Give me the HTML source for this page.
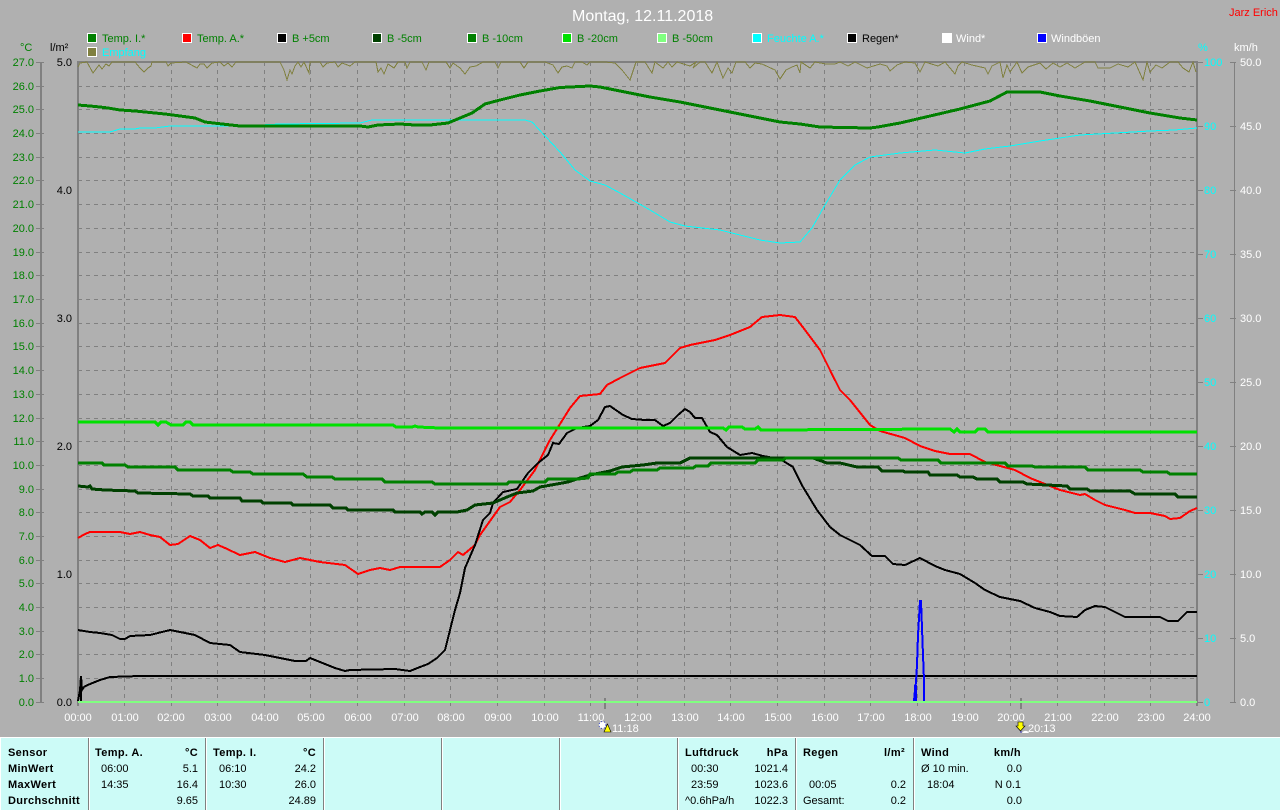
<!DOCTYPE html>
<html><head><meta charset="utf-8"><title>Montag, 12.11.2018</title>
<style>
html,body{margin:0;padding:0;background:#b0b0b0;width:1280px;height:810px;overflow:hidden}
svg{display:block}
text{font-family:"Liberation Sans",sans-serif;font-size:11px}
polyline{fill:none}
.b{font-weight:bold;letter-spacing:.35px}
</style></head><body>
<svg width="1280" height="810" viewBox="0 0 1280 810" xmlns="http://www.w3.org/2000/svg">
<rect width="1280" height="810" fill="#b0b0b0"/>
<text x="572" y="21" fill="#fff" style="font-size:16px">Montag, 12.11.2018</text>
<text x="1229" y="16" fill="#f00">Jarz Erich</text>

<!-- legend -->
<g stroke="#fff" stroke-width="1" shape-rendering="crispEdges">
<rect x="87.5" y="33.5" width="9" height="9" fill="#008000"/>
<rect x="182.5" y="33.5" width="9" height="9" fill="#f00"/>
<rect x="277.5" y="33.5" width="9" height="9" fill="#000"/>
<rect x="372.5" y="33.5" width="9" height="9" fill="#004000"/>
<rect x="467.5" y="33.5" width="9" height="9" fill="#008000"/>
<rect x="562.5" y="33.5" width="9" height="9" fill="#00e000"/>
<rect x="657.5" y="33.5" width="9" height="9" fill="#80ff80"/>
<rect x="752.5" y="33.5" width="9" height="9" fill="#0ff"/>
<rect x="847.5" y="33.5" width="9" height="9" fill="#000"/>
<rect x="942.5" y="33.5" width="9" height="9" fill="#fff"/>
<rect x="1037.5" y="33.5" width="9" height="9" fill="#00f"/>
<rect x="87.5" y="47.5" width="9" height="9" fill="#808040"/>
</g>
<g fill="#008000">
<text x="102" y="42">Temp. I.*</text>
<text x="197" y="42">Temp. A.*</text>
<text x="292" y="42">B +5cm</text>
<text x="387" y="42">B -5cm</text>
<text x="482" y="42">B -10cm</text>
<text x="577" y="42">B -20cm</text>
<text x="672" y="42">B -50cm</text>
</g>
<text x="767" y="42" fill="#0ff">Feuchte A.*</text>
<text x="862" y="42" fill="#000">Regen*</text>
<text x="956" y="42" fill="#fff">Wind*</text>
<text x="1051" y="42" fill="#fff">Windböen</text>
<text x="102" y="56" fill="#0ff">Empfang</text>

<!-- axis headers -->
<text x="20" y="51" fill="#008000">°C</text>
<text x="50" y="51" fill="#000">l/m²</text>
<text x="1198" y="51" fill="#0ff">%</text>
<text x="1234" y="51" fill="#fff">km/h</text>

<!-- grid -->
<path shape-rendering="crispEdges" fill="none" stroke="#808080" stroke-width="1" stroke-dasharray="4 4" d="M78 86.5H1197M78 109.5H1197M78 133.5H1197M78 157.5H1197M78 180.5H1197M78 204.5H1197M78 228.5H1197M78 252.5H1197M78 275.5H1197M78 299.5H1197M78 323.5H1197M78 346.5H1197M78 370.5H1197M78 394.5H1197M78 418.5H1197M78 441.5H1197M78 465.5H1197M78 489.5H1197M78 512.5H1197M78 536.5H1197M78 560.5H1197M78 583.5H1197M78 607.5H1197M78 631.5H1197M78 654.5H1197M78 678.5H1197"/>
<path shape-rendering="crispEdges" fill="none" stroke="#808080" stroke-width="1" stroke-dasharray="4 4" d="M124.5 62V707M171.5 62V707M217.5 62V707M264.5 62V707M310.5 62V707M357.5 62V707M404.5 62V707M450.5 62V707M497.5 62V707M544.5 62V707M590.5 62V707M637.5 62V707M684.5 62V707M730.5 62V707M777.5 62V707M824.5 62V707M870.5 62V707M917.5 62V707M964.5 62V707M1010.5 62V707M1057.5 62V707M1104.5 62V707M1150.5 62V707"/>

<!-- frame and axes -->
<g shape-rendering="crispEdges" fill="#808080">
<rect x="77" y="61" width="1121" height="2"/>
<rect x="77" y="61" width="2" height="645"/>
<rect x="1196" y="61" width="2" height="645"/>
<rect x="40" y="62" width="2" height="640"/>
<rect x="1234" y="62" width="1" height="640"/>
<rect x="604" y="698" width="2" height="11"/>
<rect x="1020" y="698" width="2" height="11"/>
</g>
<path shape-rendering="crispEdges" stroke="#808080" stroke-width="1" fill="none" d="M36 62.5H44M36 86.5H44M36 109.5H44M36 133.5H44M36 157.5H44M36 180.5H44M36 204.5H44M36 228.5H44M36 252.5H44M36 275.5H44M36 299.5H44M36 323.5H44M36 346.5H44M36 370.5H44M36 394.5H44M36 418.5H44M36 441.5H44M36 465.5H44M36 489.5H44M36 512.5H44M36 536.5H44M36 560.5H44M36 583.5H44M36 607.5H44M36 631.5H44M36 654.5H44M36 678.5H44M36 702.5H44M1230 62.5H1236M1230 126.5H1236M1230 190.5H1236M1230 254.5H1236M1230 318.5H1236M1230 382.5H1236M1230 446.5H1236M1230 510.5H1236M1230 574.5H1236M1230 638.5H1236M1230 702.5H1236M1198 62.5H1203M1198 126.5H1203M1198 190.5H1203M1198 254.5H1203M1198 318.5H1203M1198 382.5H1203M1198 446.5H1203M1198 510.5H1203M1198 574.5H1203M1198 638.5H1203M1198 702.5H1203"/>

<!-- axis labels -->
<g fill="#008000" text-anchor="end">
<text x="34" y="66">27.0</text><text x="34" y="90">26.0</text><text x="34" y="113">25.0</text><text x="34" y="137">24.0</text><text x="34" y="161">23.0</text><text x="34" y="184">22.0</text><text x="34" y="208">21.0</text><text x="34" y="232">20.0</text><text x="34" y="256">19.0</text><text x="34" y="279">18.0</text><text x="34" y="303">17.0</text><text x="34" y="327">16.0</text><text x="34" y="350">15.0</text><text x="34" y="374">14.0</text><text x="34" y="398">13.0</text><text x="34" y="422">12.0</text><text x="34" y="445">11.0</text><text x="34" y="469">10.0</text><text x="34" y="493">9.0</text><text x="34" y="516">8.0</text><text x="34" y="540">7.0</text><text x="34" y="564">6.0</text><text x="34" y="587">5.0</text><text x="34" y="611">4.0</text><text x="34" y="635">3.0</text><text x="34" y="658">2.0</text><text x="34" y="682">1.0</text><text x="34" y="706">0.0</text>
</g>
<g fill="#000" text-anchor="end">
<text x="72" y="66">5.0</text><text x="72" y="194">4.0</text><text x="72" y="322">3.0</text><text x="72" y="450">2.0</text><text x="72" y="578">1.0</text><text x="72" y="706">0.0</text>
</g>
<g fill="#0ff">
<text x="1204" y="66">100</text><text x="1204" y="130">90</text><text x="1204" y="194">80</text><text x="1204" y="258">70</text><text x="1204" y="322">60</text><text x="1204" y="386">50</text><text x="1204" y="450">40</text><text x="1204" y="514">30</text><text x="1204" y="578">20</text><text x="1204" y="642">10</text><text x="1204" y="706">0</text>
</g>
<g fill="#fff">
<text x="1240" y="66">50.0</text><text x="1240" y="130">45.0</text><text x="1240" y="194">40.0</text><text x="1240" y="258">35.0</text><text x="1240" y="322">30.0</text><text x="1240" y="386">25.0</text><text x="1240" y="450">20.0</text><text x="1240" y="514">15.0</text><text x="1240" y="578">10.0</text><text x="1240" y="642">5.0</text><text x="1240" y="706">0.0</text>
</g>
<g fill="#fff" text-anchor="middle">
<text x="78" y="721">00:00</text><text x="125" y="721">01:00</text><text x="171" y="721">02:00</text><text x="218" y="721">03:00</text><text x="265" y="721">04:00</text><text x="311" y="721">05:00</text><text x="358" y="721">06:00</text><text x="405" y="721">07:00</text><text x="451" y="721">08:00</text><text x="498" y="721">09:00</text><text x="545" y="721">10:00</text><text x="591" y="721">11:00</text><text x="638" y="721">12:00</text><text x="685" y="721">13:00</text><text x="731" y="721">14:00</text><text x="778" y="721">15:00</text><text x="825" y="721">16:00</text><text x="871" y="721">17:00</text><text x="918" y="721">18:00</text><text x="965" y="721">19:00</text><text x="1011" y="721">20:00</text><text x="1058" y="721">21:00</text><text x="1105" y="721">22:00</text><text x="1151" y="721">23:00</text><text x="1197" y="721">24:00</text>
</g>
<text x="612" y="732" fill="#fff">11:18</text>
<text x="1028" y="732" fill="#fff">20:13</text>

<!-- sun icons -->
<circle cx="602.5" cy="725" r="3.5" fill="#fff" stroke="#3040c0" stroke-width="1" stroke-dasharray="1 2"/>
<path d="M607.5 724L611 732H604Z" fill="#ff0" stroke="#000" stroke-width=".6"/>
<path d="M1018 722H1023V726H1025L1020.5 731L1016 726H1018Z" fill="#ff0" stroke="#000" stroke-width=".6"/>
<path d="M1022 733a4 4 0 0 1 7 0Z" fill="#fff"/>
<circle cx="1021" cy="732" r=".7" fill="#22c"/>

<!-- data lines -->
<g fill="none" shape-rendering="crispEdges">
<polyline stroke="#0ff" stroke-width="1" points="78,132 110,132 120,129 135,129 140,128 155,128 170,126 240,126 280,124 360,123 372,120 395,120 400,120 525,120 532,122 545,136 560,152 575,170 590,181 605,185 620,193 650,210 670,222 685,226 720,230 740,235 760,240 780,243 800,242 812,228 825,205 840,180 855,165 870,157 900,153 935,150 965,153 985,149 1010,146 1040,141 1060,138 1080,135 1115,133 1150,131 1175,130 1197,128"/>
<polyline stroke="#808040" stroke-width="1" points="78,67 80,63 87,62 93,73 99,65 102,69 106,64 109,66 112,62 135,62 140,68 144,72 148,68 151,66 152,62 166,62 168,66 171,63 186,62 197,68 200,64 204,64 207,68 212,63 220,62 224,66 228,63 232,67 236,62 264,62 280,62 284,70 287,80 290,70 292,74 295,66 298,62 301,67 304,62 309,73 310,62 320,62 323,67 327,63 335,62 338,67 342,63 350,66 355,62 376,62 378,72 381,68 384,74 388,64 394,68 398,62 405,62 407,68 410,62 422,62 426,70 429,62 437,62 446,62 450,68 453,63 460,68 465,74 470,67 476,66 483,62 495,62 498,68 501,62 520,62 524,68 528,62 545,62 553,65 558,73 562,67 567,66 572,68 575,62 582,62 587,65 590,62 605,62 615,63 622,70 630,80 634,68 636,62 645,62 652,73 655,62 659,65 663,68 668,62 672,67 677,62 690,66 696,62 693,68 700,62 705,62 712,73 717,62 723,78 728,68 732,73 736,62 745,62 750,68 755,63 762,64 775,70 780,79 786,70 792,67 797,65 800,73 801,62 810,68 815,62 826,64 835,64 840,62 848,66 855,62 867,68 880,64 887,66 890,71 897,65 905,62 915,63 920,72 925,62 938,66 945,62 955,74 958,66 962,62 972,65 985,68 988,74 992,66 1000,62 1003,78 1007,65 1010,72 1017,62 1022,73 1028,67 1040,63 1046,69 1053,63 1060,67 1067,63 1075,68 1085,62 1095,62 1098,68 1110,68 1118,64 1128,67 1135,62 1143,80 1147,62 1150,72 1156,65 1162,68 1170,62 1178,62 1183,68 1189,72 1193,62 1196,72"/>
<polyline stroke="#000" stroke-width="2" points="78,701 80,690 81,676 82,690 84,687 90,684 100,680 110,677 140,676 1197,676"/>
<rect x="80" y="676" width="2" height="26" fill="#000"/>
<polyline stroke="#008000" stroke-width="3" points="78,105 90,106 100,107 108,108 120,110 135,111 150,112.5 165,114 180,116 195,118 205,122 222,124 240,126 360,126 368,127 378,125 400,124 415,125 430,125 448,123 460,118 472,113 485,104 500,100 520,95 540,91 560,87.5 590,86 600,87 630,93 650,97 680,102 710,108 730,112 760,118 780,122 800,124 820,127 870,128 878,127 900,123 930,116 960,109 990,101 1007,92 1040,92 1060,96 1090,101 1120,107 1150,113 1180,118 1197,120"/>
<polyline stroke="#f00" stroke-width="2" points="78,538 85,534 90,532 120,532 130,534 140,532 150,535 160,537 170,545 178,544 190,536 200,540 210,548 218,545 225,548 240,555 255,552 270,558 285,562 300,558 310,560 320,562 345,565 358,574 370,570 380,568 390,570 400,567 440,567 450,560 458,552 463,555 475,545 480,535 500,507 510,502 520,490 535,470 550,440 570,408 580,396 600,394 607,385 620,378 640,368 665,363 680,348 690,345 715,340 730,335 750,327 762,317 780,315 795,317 805,330 820,350 830,370 840,390 850,400 870,425 880,431 905,438 920,446 935,451 950,454 970,454 985,462 1000,466 1015,470 1030,478 1045,484 1060,490 1080,495 1085,494 1095,500 1105,505 1125,510 1135,513 1150,513 1165,516 1170,519 1180,518 1190,511 1197,508"/>
<polyline stroke="#000" stroke-width="2" points="78,630 90,632 100,633 112,635 120,639 125,639 130,636 150,635 170,630 180,632 195,635 210,643 230,645 240,652 265,655 280,658 295,661 306,661 310,658 320,662 335,668 345,671 350,670 395,669 410,671 420,667 428,664 437,658 445,650 450,630 455,610 460,593 465,568 475,545 483,520 490,513 493,503 503,492 517,489 528,473 538,463 548,455 553,443 559,444 567,433 577,428 590,426 598,420 605,407 610,406 623,415 632,419 645,420 655,420 663,426 670,423 678,415 685,409 690,412 695,418 702,418 710,432 717,435 727,447 740,455 752,453 763,456 780,459 793,467 803,487 817,510 830,527 840,535 850,540 860,545 872,556 885,556 893,564 905,565 920,558 935,566 945,570 960,574 975,583 985,590 1000,597 1020,601 1035,608 1050,612 1060,616 1077,617 1085,610 1095,606 1105,607 1115,612 1125,617 1160,617 1168,621 1178,621 1187,612 1197,612"/>
<polyline stroke="#004000" stroke-width="3" points="78,486 88,487 90,486 92,489 105,490 135,491 138,493 190,494 193,496 208,496 210,498 240,498 242,501 261,501 263,503 291,503 293,505 330,505 333,508 346,508 348,510 393,510 395,512 420,512 422,514 425,512 432,512 435,515 438,512 440,512 457,512 467,510 475,505 493,503 507,497 517,493 533,491 540,487 557,484 568,482 580,478 590,475 610,471 622,467 643,465 657,463 680,463 690,458 813,458 827,463 840,463 857,467 878,467 882,471 903,471 905,472 928,472 930,475 957,475 960,477 973,477 977,479 997,479 1000,482 1023,482 1027,484 1067,486 1070,489 1087,489 1090,491 1130,491 1135,494 1175,494 1178,497 1197,497"/>
<polyline stroke="#008000" stroke-width="3" points="78,463 102,463 104,465 125,465 128,467 175,467 178,470 230,470 233,472 250,472 253,474 303,474 307,477 332,477 335,479 382,479 385,482 432,482 435,484 507,484 509,482 545,482 548,479 578,479 588,478 590,474 615,474 618,472 630,472 633,470 657,470 660,468 693,468 696,466 708,466 711,463 755,463 758,460 783,460 786,458 898,458 901,460 938,460 941,463 1005,463 1008,466 1032,466 1035,467 1085,467 1088,470 1140,470 1143,472 1167,472 1170,474 1197,474"/>
<polyline stroke="#00e000" stroke-width="3" points="78,422 155,422 158,425 161,422 166,422 171,425 183,425 186,422 190,422 193,425 393,425 396,427 412,427 415,426 418,427 440,428 723,428 726,430 729,427 742,427 745,429 755,429 758,427 761,430 950,429 954,432 957,429 960,432 975,432 978,429 985,429 988,432 1197,432"/>
<rect x="78" y="701" width="1119" height="2" fill="#80ff80"/>
<polyline stroke="#00f" stroke-width="2" points="914,701 915,690 916,682 917,665 918,635 920,601 921,601 922,628 923,655 924,680 924,701"/>
<path d="M914 685h3v16h-3z" fill="#00f"/>
</g>

<!-- table -->
<rect x="0" y="737" width="1280" height="73" fill="#ccfbf7" shape-rendering="crispEdges"/>
<rect x="0" y="737" width="1280" height="1" fill="#fff" shape-rendering="crispEdges"/>
<rect x="0" y="737" width="1" height="73" fill="#fff" shape-rendering="crispEdges"/>
<g fill="#808080" shape-rendering="crispEdges">
<rect x="88" y="738" width="1" height="72"/><rect x="205" y="738" width="1" height="72"/><rect x="323" y="738" width="1" height="72"/><rect x="441" y="738" width="1" height="72"/><rect x="559" y="738" width="1" height="72"/><rect x="677" y="738" width="1" height="72"/><rect x="795" y="738" width="1" height="72"/><rect x="913" y="738" width="1" height="72"/>
</g>
<g fill="#fff" shape-rendering="crispEdges">
<rect x="89" y="738" width="1" height="72"/><rect x="206" y="738" width="1" height="72"/><rect x="324" y="738" width="1" height="72"/><rect x="442" y="738" width="1" height="72"/><rect x="560" y="738" width="1" height="72"/><rect x="678" y="738" width="1" height="72"/><rect x="796" y="738" width="1" height="72"/><rect x="914" y="738" width="1" height="72"/>
</g>
<g fill="#000">
<text class="b" x="8" y="756">Sensor</text>
<text class="b" x="8" y="772">MinWert</text>
<text class="b" x="8" y="788">MaxWert</text>
<text class="b" x="8" y="804">Durchschnitt</text>

<text class="b" x="95" y="756">Temp. A.</text>
<text class="b" x="198" y="756" text-anchor="end">°C</text>
<text x="101" y="772">06:00</text><text x="198" y="772" text-anchor="end">5.1</text>
<text x="101" y="788">14:35</text><text x="198" y="788" text-anchor="end">16.4</text>
<text x="198" y="804" text-anchor="end">9.65</text>

<text class="b" x="213" y="756">Temp. I.</text>
<text class="b" x="316" y="756" text-anchor="end">°C</text>
<text x="219" y="772">06:10</text><text x="316" y="772" text-anchor="end">24.2</text>
<text x="219" y="788">10:30</text><text x="316" y="788" text-anchor="end">26.0</text>
<text x="316" y="804" text-anchor="end">24.89</text>

<text class="b" x="685" y="756">Luftdruck</text>
<text class="b" x="788" y="756" text-anchor="end">hPa</text>
<text x="691" y="772">00:30</text><text x="788" y="772" text-anchor="end">1021.4</text>
<text x="691" y="788">23:59</text><text x="788" y="788" text-anchor="end">1023.6</text>
<text x="685" y="804">^0.6hPa/h</text><text x="788" y="804" text-anchor="end">1022.3</text>

<text class="b" x="803" y="756">Regen</text>
<text class="b" x="905" y="756" text-anchor="end">l/m²</text>
<text x="809" y="788">00:05</text><text x="906" y="788" text-anchor="end">0.2</text>
<text x="803" y="804">Gesamt:</text><text x="906" y="804" text-anchor="end">0.2</text>

<text class="b" x="921" y="756">Wind</text>
<text class="b" x="1021" y="756" text-anchor="end">km/h</text>
<text x="921" y="772">Ø 10 min.</text><text x="1022" y="772" text-anchor="end">0.0</text>
<text x="927" y="788">18:04</text><text x="1021" y="788" text-anchor="end">N 0.1</text>
<text x="1022" y="804" text-anchor="end">0.0</text>
</g>
</svg>
</body></html>
